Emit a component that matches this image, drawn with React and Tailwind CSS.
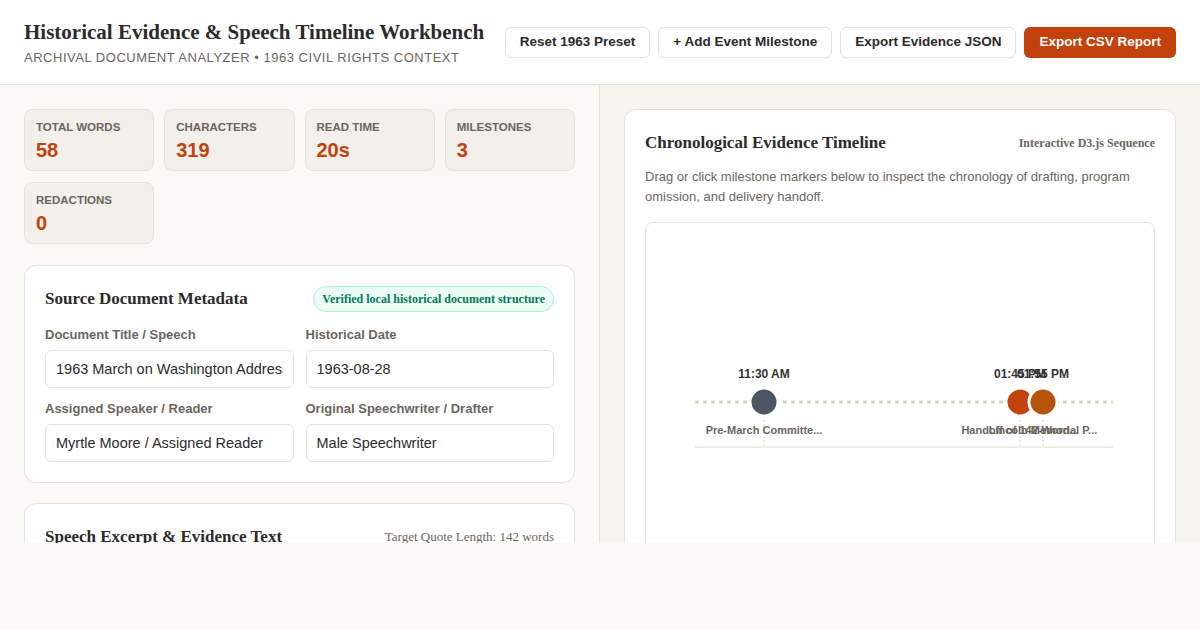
import React from "react";

const sans = { fontFamily: '"Liberation Sans", Arial, sans-serif' };
const serif = { fontFamily: '"Liberation Serif", "Times New Roman", serif' };

function Stat({ label, value }) {
  return (
    <div className="h-[62px] rounded-lg border border-[#e8e1d9] bg-[#f3efeb] px-[11px] pt-[9px]">
      <div className="text-[11.5px] font-bold uppercase leading-4 text-[#6b6560]">{label}</div>
      <div className="mt-px text-[20px] font-bold leading-7 text-[#c2410c]">{value}</div>
    </div>
  );
}

function Field({ label, value }) {
  return (
    <div>
      <div className="text-[13px] font-bold leading-[18px] text-[#6b6560]">{label}</div>
      <input
        readOnly
        value={value}
        style={sans}
        className="mt-1.5 block h-[38px] w-full rounded-md border border-[#e8e1d9] bg-white px-2.5 text-[14.5px] text-[#2b2b2b] outline-none"
      />
    </div>
  );
}

function Timeline() {
  const events = [
    { x: 118, color: "#4b5563", time: "11:30 AM", label: "Pre-March Committe..." },
    { x: 374, color: "#c2410c", time: "01:45 PM", label: "Handoff of 142-Word..." },
    { x: 397, color: "#b45309", time: "01:55 PM", label: "Lincoln Memorial P..." },
  ];
  return (
    <svg width="506" height="330" className="block" style={sans}>
      <line x1="49" y1="179" x2="467" y2="179" stroke="#d8d2c6" strokeWidth="3" strokeDasharray="4 4" />
      <line x1="49" y1="224" x2="467" y2="224" stroke="#efebe6" strokeWidth="2" />
      {events.map((e) => (
        <line key={e.time + "l"} x1={e.x} y1={193} x2={e.x} y2={223} stroke="#d8d2c6" strokeWidth="1" strokeDasharray="2 2" />
      ))}
      {events.map((e) => (
        <g key={e.time}>
          <text x={e.x} y={155} textAnchor="middle" fontSize="12" fontWeight="700" fill="#333">
            {e.time}
          </text>
          <circle cx={e.x} cy={179} r="14" fill={e.color} stroke="#fff" strokeWidth="3" />
          <text x={e.x} y={211} textAnchor="middle" fontSize="11" fontWeight="700" fill="#6b6560">
            {e.label}
          </text>
        </g>
      ))}
    </svg>
  );
}

export default function App() {
  return (
    <div className="min-h-[630px] bg-[#faf9f6]" style={sans}>
      <header className="flex h-[85px] items-center justify-between border-b border-[#e7e2da] bg-white px-6">
        <div>
          <h1 style={serif} className="text-[21px] font-bold leading-7 text-[#2b2b2b]">
            Historical Evidence &amp; Speech Timeline Workbench
          </h1>
          <p className="mt-[3px] text-[13px] uppercase leading-[18px] tracking-[0.04em] text-[#6b6560]">
            Archival Document Analyzer • 1963 Civil Rights Context
          </p>
        </div>
        <div className="flex items-center gap-2">
          {["Reset 1963 Preset", "+ Add Event Milestone", "Export Evidence JSON"].map((b) => (
            <button
              key={b}
              className="h-[31px] rounded-md border border-[#e8e1d9] bg-white px-[14px] text-[13.5px] font-bold text-[#2b2b2b]"
            >
              {b}
            </button>
          ))}
          <button className="h-[31px] rounded-md bg-[#c2410c] px-[15px] text-[13.5px] font-bold text-white">
            Export CSV Report
          </button>
        </div>
      </header>

      <main className="grid h-[458px] grid-cols-[600px_1fr] overflow-hidden">
        <section className="overflow-hidden border-r border-[#e7e2da] bg-[#faf9f6] p-6">
          <div className="grid grid-cols-4 gap-x-2.5 gap-y-[11px]">
            <Stat label="Total Words" value="58" />
            <Stat label="Characters" value="319" />
            <Stat label="Read Time" value="20s" />
            <Stat label="Milestones" value="3" />
            <Stat label="Redactions" value="0" />
          </div>

          <div className="mt-[21px] rounded-xl border border-[#e8e1d9] bg-white px-5 pb-5 pt-5">
            <div className="flex items-center justify-between">
              <h2 style={serif} className="text-[17px] font-bold leading-[26px] text-[#2b2b2b]">
                Source Document Metadata
              </h2>
              <span
                style={serif}
                className="rounded-full border border-[#a7f3d0] bg-[#ecfdf5] px-2 py-[5px] text-[12px] font-bold leading-[14px] text-[#047857]"
              >
                Verified local historical document structure
              </span>
            </div>
            <div className="mt-3.5 grid grid-cols-2 gap-x-3 gap-y-3">
              <Field label="Document Title / Speech" value="1963 March on Washington Address" />
              <Field label="Historical Date" value="1963-08-28" />
              <Field label="Assigned Speaker / Reader" value="Myrtle Moore / Assigned Reader" />
              <Field label="Original Speechwriter / Drafter" value="Male Speechwriter" />
            </div>
          </div>

          <div className="mt-5 rounded-xl border border-[#e8e1d9] bg-white px-5 pt-5 pb-5">
            <div className="flex items-center justify-between">
              <h2 style={serif} className="text-[17px] font-bold leading-[26px] text-[#2b2b2b]">
                Speech Excerpt &amp; Evidence Text
              </h2>
              <span style={serif} className="text-[13px] text-[#6b6560]">
                Target Quote Length: 142 words
              </span>
            </div>
            <div className="h-40" />
          </div>
        </section>

        <section className="overflow-hidden bg-[#f7f5f0] px-6 pt-6">
          <div className="rounded-xl border border-[#e8e1d9] bg-white px-5 pt-5 pb-5">
            <div className="flex items-center justify-between">
              <h2 style={serif} className="text-[17px] font-bold leading-[26px] text-[#2b2b2b]">
                Chronological Evidence Timeline
              </h2>
              <span style={serif} className="text-[12px] font-bold text-[#6b6560]">
                Interactive D3.js Sequence
              </span>
            </div>
            <p className="mt-[11px] text-[13px] leading-5 text-[#6b6560]">
              Drag or click milestone markers below to inspect the chronology of drafting, program omission, and delivery handoff.
            </p>
            <div className="mt-[15px] rounded-lg border border-[#e8e1d9] bg-white">
              <Timeline />
            </div>
          </div>
        </section>
      </main>
    </div>
  );
}
